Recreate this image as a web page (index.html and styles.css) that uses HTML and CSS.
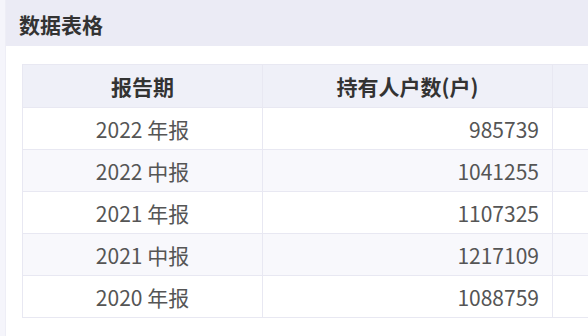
FILE: index.html
```html
<!DOCTYPE html>
<html lang="zh">
<head>
<meta charset="utf-8">
<link rel="stylesheet" href="styles.css">
</head>
<body>
<div class="card">
  <div class="card-head">数据表格</div>
  <div class="card-body">
    <table class="grid">
      <colgroup>
        <col class="c1"><col class="c2"><col class="c3">
      </colgroup>
      <thead>
        <tr><th>报告期</th><th>持有人户数(户)</th><th></th></tr>
      </thead>
      <tbody>
        <tr><td class="center">2022 年报</td><td class="num">985739</td><td></td></tr>
        <tr><td class="center">2022 中报</td><td class="num">1041255</td><td></td></tr>
        <tr><td class="center">2021 年报</td><td class="num">1107325</td><td></td></tr>
        <tr><td class="center">2021 中报</td><td class="num">1217109</td><td></td></tr>
        <tr><td class="center">2020 年报</td><td class="num">1088759</td><td></td></tr>
      </tbody>
    </table>
  </div>
</div>
</body>
</html>
```
FILE: styles.css
```css
html, body {
  margin: 0;
  padding: 0;
  overflow: hidden;
}
body {
  background: #f5f5fb;
  width: 588px;
  height: 336px;
  font-family: "Noto Sans CJK SC", "Noto Sans", sans-serif;
}
.card {
  margin-left: 5px;
  width: 800px;
  height: 336px;
  background: #ffffff;
  border-left: 1px solid #eeeef6;
}
.card-head {
  height: 46px;
  box-sizing: border-box;
  padding: 8px 0 0 13px;
  background: #ebebf5;
  font-size: 21px;
  font-weight: 700;
  line-height: 32px;
  color: #333;
}
.card-body {
  padding: 18px 0 0 16px;
}
.grid {
  border-collapse: collapse;
  table-layout: fixed;
  width: 730px;
  font-size: 21px;
}
.c1 { width: 240px; }
.c2 { width: 290px; }
.c3 { width: 200px; }
.grid th, .grid td {
  border: 1px solid #e8e8f2;
  padding: 0 13px;
  white-space: nowrap;
}
.grid th {
  height: 42px;
  background: #eff0f8;
  color: #333;
  font-weight: 700;
  text-align: center;
}
.grid td {
  height: 41px;
  color: #555;
}
.grid tbody tr:nth-child(even) td {
  background: #f8f8fc;
}
.center { text-align: center; }
.num { text-align: right; }
```
